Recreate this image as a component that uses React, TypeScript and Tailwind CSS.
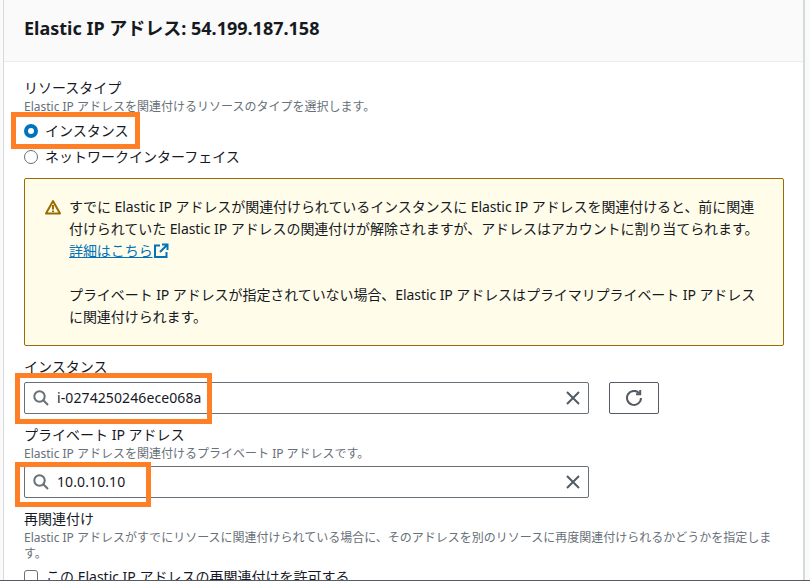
const font = "font-['Noto_Sans','Noto_Sans_CJK_JP',sans-serif]";

function Highlight({ className }: { className: string }) {
  return <div className={`pointer-events-none absolute border-[5px] border-[#ff7f27] ${className}`} />;
}

function SearchIcon() {
  return (
    <svg viewBox="0 0 16 16" className="h-4 w-4 shrink-0 text-[#687078]" fill="none" stroke="currentColor" strokeWidth="2">
      <circle cx="6.5" cy="6.5" r="5.2" />
      <path d="M10.3 10.3 15 15" />
    </svg>
  );
}

function ClearIcon() {
  return (
    <svg viewBox="0 0 16 16" className="h-4 w-4 shrink-0 text-[#545b64]" fill="none" stroke="currentColor" strokeWidth="2">
      <path d="m2 2 12 12M14 2 2 14" />
    </svg>
  );
}

function SearchInput({ value }: { value: string }) {
  return (
    <div className="flex h-8 w-[565px] items-center rounded-[2px] border border-[#687078] pl-2 pr-[7px] text-sm tracking-[0.1px] text-[#16191f]">
      <SearchIcon />
      <span className="ml-[8px] flex-1 leading-[22px]">{value}</span>
      <ClearIcon />
    </div>
  );
}

export default function App() {
  return (
    <div className={`relative h-[581px] w-[810px] overflow-hidden bg-[#fafafa] text-[#16191f] ${font}`}>
      <div className="ml-[3px] h-full w-[802px] border-l border-r-2 border-l-[#d5dbdb] border-r-[#d5dbdb] bg-white">
        <div className="flex h-[62px] items-center border-b border-[#eaeded] bg-[#fafafa] pb-[6px] pl-5">
          <h1 className="text-[18px] font-bold leading-[22px]">Elastic IP アドレス: 54.199.187.158</h1>
        </div>
        <div className="pl-5 pt-[15px]">
          <div className="text-sm leading-[22px]">リソースタイプ</div>
          <div className="text-xs leading-4 text-[#687078]">Elastic IP アドレスを関連付けるリソースのタイプを選択します。</div>
          <div className="mt-[3px] flex h-[26px] items-center gap-[7px] text-sm">
            <span className="box-border h-[14px] w-[14px] rounded-full border-[4px] border-[#0073bb] bg-white" />
            インスタンス
          </div>
          <div className="flex h-[26px] items-center gap-[7px] text-sm">
            <span className="box-border h-[14px] w-[14px] rounded-full border border-[#687078] bg-white" />
            ネットワークインターフェイス
          </div>
          <div className="mt-[8px] flex h-[168px] w-[760px] rounded-[2px] border border-[#9a6b00] bg-[#fffce9] pl-5 pt-[17px] text-sm leading-[22px]">
            <svg viewBox="0 0 16 16" className="mr-[8px] mt-[3px] h-4 w-4 shrink-0 text-[#9a6b00]" fill="none" stroke="currentColor" strokeWidth="2" strokeLinejoin="round">
              <path d="M8 2 15 14.5H1Z" />
              <path d="M8 6v4.5M8 11.5v1.5" />
            </svg>
            <div className="whitespace-nowrap tracking-[-0.005em]">
              <p>
                すでに Elastic IP アドレスが関連付けられているインスタンスに Elastic IP アドレスを関連付けると、前に関連
                <br />
                付けられていた Elastic IP アドレスの関連付けが解除されますが、アドレスはアカウントに割り当てられます。
              </p>
              <p>
                <a className="inline-flex items-center text-[#0073bb]">
                  <span className="underline">詳細はこちら</span>
                  <svg viewBox="0 0 16 16" className="h-4 w-4" fill="none" stroke="currentColor" strokeWidth="2">
                    <path d="M7 2.5H2V14h11.5V9" />
                    <path d="M9 1.5h5.5V7M14.5 1.5 7 9" />
                  </svg>
                </a>
              </p>
              <p className="mt-[22px]">
                プライベート IP アドレスが指定されていない場合、Elastic IP アドレスはプライマリプライベート IP アドレス
                <br />
                に関連付けられます。
              </p>
            </div>
          </div>
          <div className="mt-[10px] text-sm leading-[22px]">インスタンス</div>
          <div className="mt-[4px] flex gap-5">
            <SearchInput value="i-0274250246ece068a" />
            <button className="flex h-8 w-[50px] items-center justify-center rounded-[2px] border border-[#545b64] text-[#545b64]">
              <svg viewBox="0 0 16 16" className="h-4 w-4" fill="none" stroke="currentColor" strokeWidth="2">
                <path d="M13.2 3.2A7 7 0 1 0 15 8" />
                <path d="M14.2 0v4.2H10" />
              </svg>
            </button>
          </div>
          <div className="mt-[10px] text-sm leading-[22px]">プライベート IP アドレス</div>
          <div className="text-xs leading-4 text-[#687078]">Elastic IP アドレスを関連付けるプライベート IP アドレスです。</div>
          <div className="mt-[4px]">
            <SearchInput value="10.0.10.10" />
          </div>
          <div className="mt-[10px] text-sm leading-[22px]">再関連付け</div>
          <div className="w-[760px] text-xs leading-4 text-[#687078]">Elastic IP アドレスがすでにリソースに関連付けられている場合に、そのアドレスを別のリソースに再度関連付けられるかどうかを指定します。</div>
          <div className="mt-[4px] flex h-[22px] items-center gap-[8px] text-sm">
            <span className="h-[14px] w-[14px] rounded-[3px] border border-[#687078]" />
            この Elastic IP アドレスの再関連付けを許可する
          </div>
        </div>
      </div>
      <div className="absolute bottom-0 left-0 h-px w-full bg-[#545b64]" />
      <Highlight className="left-[11px] top-[112px] h-[37px] w-[129px]" />
      <Highlight className="left-[15px] top-[373px] h-[51px] w-[197px]" />
      <Highlight className="left-[15px] top-[462px] h-[45px] w-[136px]" />
    </div>
  );
}
